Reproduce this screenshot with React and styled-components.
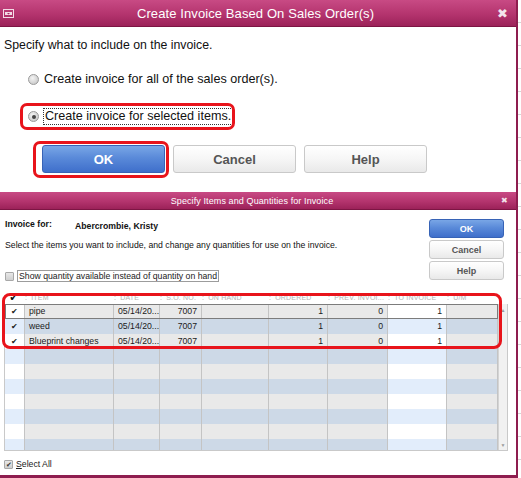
import styled, { createGlobalStyle } from "styled-components";

const GlobalStyle = createGlobalStyle`
    html, body {
        margin: 0;
        padding: 0;
    }
    body {
        width: 521px;
        height: 478px;
        overflow: hidden;
        font-family: "Liberation Sans", Arial, sans-serif;
        background-color: #fff;
        background-image: repeating-linear-gradient(
            to bottom,
            transparent 0px,
            transparent 22px,
            #d6d6d6 22px,
            #d6d6d6 23px
        );
    }
`;

const Page = styled.div`
    display: flex;
    flex-direction: column;
    width: 518px;
`;

const Dialog = styled.div`
    position: relative;
    display: flex;
    flex-direction: column;
    background: #fff;
    height: ${(p) => p.$height}px;
    border-right: 2px solid #8e1d4f;
    border-bottom: ${(p) => (p.$bottom ? "3px solid #8e1d4f" : "none")};
    box-sizing: border-box;
`;

const TitleBar = styled.div`
    display: flex;
    align-items: center;
    height: ${(p) => p.$h}px;
    padding: 0 ${(p) => p.$pad}px 0 3px;
    background: linear-gradient(to bottom, #c84a84 0%, #b4346e 55%, #9c2259 100%);
    border-bottom: 1px solid #7d1544;
    color: #fff;
    flex-shrink: 0;
`;

const TitleText = styled.div`
    flex: 1;
    text-align: center;
    font-size: ${(p) => p.$size}px;
    letter-spacing: 0.1px;
`;

const CloseX = styled.span`
    font-size: ${(p) => p.$size}px;
    color: #f3e4ec;
    line-height: 1;
`;

const Body1 = styled.div`
    display: flex;
    flex-direction: column;
    padding: 0 4px;
`;

const Lead = styled.div`
    font-size: 12.3px;
    color: #111;
    margin-top: 11px;
    line-height: 15px;
`;

const RadioRow = styled.label`
    display: flex;
    align-items: center;
    gap: 5px;
    font-size: 12.6px;
    color: #111;
    line-height: 15px;
`;

const RadioDot = styled.span`
    width: 11px;
    height: 11px;
    border-radius: 50%;
    box-sizing: border-box;
    border: 1px solid #9a9a9a;
    background: radial-gradient(circle at 40% 35%, #f4f4f4 0%, #cfcfcf 70%, #bdbdbd 100%);
    display: flex;
    align-items: center;
    justify-content: center;

    &::after {
        content: "";
        width: 4px;
        height: 4px;
        border-radius: 50%;
        background: ${(p) => (p.$on ? "#444" : "transparent")};
    }
`;

const FocusText = styled.span`
    outline: 1px dotted #333;
    outline-offset: 0;
    padding: 0 1px;
`;

const Ring = styled.span`
    position: relative;
    display: inline-flex;
    align-self: flex-start;

    &::after {
        content: "";
        position: absolute;
        top: ${(p) => p.$t}px;
        right: ${(p) => p.$r}px;
        bottom: ${(p) => p.$b}px;
        left: ${(p) => p.$l}px;
        border: 3px solid #e8141b;
        border-radius: 7px;
        pointer-events: none;
    }
`;

const ButtonRow = styled.div`
    display: flex;
    gap: 8px;
    margin-left: 38px;
    margin-top: 21px;
`;

const Button = styled.button`
    width: ${(p) => p.$w}px;
    height: ${(p) => p.$h}px;
    box-sizing: border-box;
    border-radius: 3px;
    font-family: "Liberation Sans", Arial, sans-serif;
    font-weight: bold;
    font-size: ${(p) => p.$size}px;
    padding: 0;
    cursor: default;
    color: ${(p) => (p.$primary ? "#fff" : "#555")};
    border: 1px solid ${(p) => (p.$primary ? "#3763b6" : "#c9c9c9")};
    background: ${(p) =>
        p.$primary
            ? "linear-gradient(to bottom, #79a6e6 0%, #5a8ad9 45%, #3f6fcb 100%)"
            : "linear-gradient(to bottom, #ffffff 0%, #f6f6f6 50%, #e9e9e9 100%)"};
`;

/* second dialog */

const Body2 = styled.div`
    display: flex;
    flex-direction: column;
    padding: 0 0 0 4px;
    flex: 1;
`;

const TopSection = styled.div`
    display: flex;
    justify-content: space-between;
    height: 81px;
`;

const InfoCol = styled.div`
    display: flex;
    flex-direction: column;
    padding-left: 1px;
    font-size: 8.7px;
    color: #111;
`;

const InfoRow = styled.div`
    display: flex;
    align-items: flex-end;
    margin-top: 9px;
    height: 12px;
    font-weight: bold;
`;

const InfoLabel = styled.span`
    width: 70px;
    position: relative;
    top: -2px;
`;

const InfoLine = styled.div`
    margin-top: 9px;
    line-height: 11px;
`;

const CheckRow = styled.div`
    display: flex;
    align-items: center;
    gap: 3px;
    margin-top: ${(p) => p.$mt}px;
    font-size: 8.7px;
    color: #222;
`;

const CheckBox = styled.span`
    width: 9px;
    height: 9px;
    box-sizing: border-box;
    border: 1px solid #a8a8a8;
    border-radius: 1px;
    background: linear-gradient(to bottom, #e8e8e8, #cfcfcf);
    display: flex;
    align-items: center;
    justify-content: center;
    font-size: 7px;
    color: #333;
    line-height: 1;
`;

const BoxedLabel = styled.span`
    border: 1px solid #9c9c9c;
    padding: 0 1px;
    line-height: 10px;
`;

const Under = styled.span`
    text-decoration: underline;
`;

const SideButtons = styled.div`
    display: flex;
    flex-direction: column;
    gap: 2px;
    margin-top: 9px;
    margin-right: 12px;
`;

const TableWrap = styled.div`
    position: relative;
    display: flex;
    flex-direction: column;
    width: 504px;
`;

const HeaderRow = styled.div`
    display: flex;
    height: 13px;
    align-items: center;
`;

const HeadCell = styled.div`
    width: ${(p) => p.$w}px;
    flex-shrink: 0;
    font-size: 7px;
    color: #b4b4b4;
    white-space: nowrap;
    overflow: hidden;
    letter-spacing: 0.2px;
    padding-left: 1px;
    box-sizing: border-box;
`;

const HeadCheck = styled.div`
    width: ${(p) => p.$w}px;
    flex-shrink: 0;
    text-align: center;
    font-size: 12px;
    font-weight: bold;
    color: #111;
    line-height: 13px;
`;

const Sep = styled.span`
    color: #a0a0a0;
    margin-right: 4px;
`;

const GridArea = styled.div`
    display: flex;
    height: 147px;
    border: 1px solid #c9c9c9;
    border-top: none;
    box-sizing: border-box;
    overflow: hidden;
    width: 504px;
`;

const Rows = styled.div`
    display: flex;
    flex-direction: column;
    width: 493px;
    flex-shrink: 0;
`;

const Row = styled.div`
    display: flex;
    height: 15px;
    flex-shrink: 0;
    box-sizing: border-box;
    background: ${(p) => (p.$alt ? "#cdd9e7" : "#e9e9e9")};
    outline: ${(p) => (p.$focus ? "1px solid #7c7c7c" : "none")};
    outline-offset: -1px;
    position: relative;
`;

const Cell = styled.div`
    width: ${(p) => p.$w}px;
    flex-shrink: 0;
    box-sizing: border-box;
    border-right: 1px solid #c4c4c4;
    font-size: 8.7px;
    color: #1a1a1a;
    line-height: 15px;
    padding: 0 4px;
    white-space: nowrap;
    overflow: hidden;
    text-align: ${(p) => (p.$right ? "right" : "left")};
    background: ${(p) => (p.$light ? (p.$alt ? "#e2edfb" : "#ffffff") : "transparent")};
`;

const CheckCell = styled(Cell)`
    text-align: center;
    padding: 0;
    font-size: 8px;
    border-right: 1px solid #c4c4c4;
`;

const ScrollBar = styled.div`
    flex: 1;
    display: flex;
    flex-direction: column;
    justify-content: space-between;
    align-items: center;
    background: #f1f1f1;
    border-left: 1px solid #d4d4d4;
    font-size: 5px;
    color: #9a9a9a;
    padding: 3px 0 2px;
`;

const Annotation = styled.div`
    position: absolute;
    top: 2px;
    left: -2px;
    width: 500px;
    height: 56px;
    box-sizing: border-box;
    border: 3px solid #e8141b;
    border-radius: 8px;
    pointer-events: none;
`;

const MenuIcon = () => (
    <svg width="11" height="9" viewBox="0 0 11 9">
        <rect x="0.5" y="0.5" width="10" height="8" fill="none" stroke="#f3dbe6" strokeWidth="1" />
        <rect x="2" y="3" width="7" height="3" fill="#f3dbe6" />
        <path d="M4 4 L7 4 L5.5 5.5 Z" fill="#a52a62" />
    </svg>
);

const COLS = [20, 89, 46, 42, 67, 59, 60, 59, 51];
const HEADS = ["ITEM", "DATE", "S.O. NO.", "ON HAND", "ORDERED", "PREV. INVOI...", "TO INVOICE", "U/M"];

const items = [
    { name: "pipe", date: "05/14/20...", so: "7007", ordered: 1, prev: 0, inv: 1 },
    { name: "weed", date: "05/14/20...", so: "7007", ordered: 1, prev: 0, inv: 1 },
    { name: "Blueprint changes", date: "05/14/20...", so: "7007", ordered: 1, prev: 0, inv: 1 },
];

export default function App() {
    const rows = [];
    for (let i = 0; i < 10; i++) {
        rows.push(items[i] || null);
    }

    return (
        <>
            <GlobalStyle />
            <Page>
                <Dialog $height={192}>
                    <TitleBar $h={26} $pad={8}>
                        <MenuIcon />
                        <TitleText $size={13}>Create Invoice Based On Sales Order(s)</TitleText>
                        <CloseX $size={13}>✖</CloseX>
                    </TitleBar>
                    <Body1>
                        <Lead>Specify what to include on the invoice.</Lead>
                        <RadioRow style={{ marginLeft: 24, marginTop: 19 }}>
                            <RadioDot />
                            Create invoice for all of the sales order(s).
                        </RadioRow>
                        <Ring $t={-6} $r={-3} $b={-6} $l={-8} style={{ marginLeft: 24, marginTop: 22 }}>
                            <RadioRow>
                                <RadioDot $on />
                                <FocusText>Create invoice for selected items.</FocusText>
                            </RadioRow>
                        </Ring>
                        <ButtonRow>
                            <Ring $t={-4} $r={-4} $b={-5} $l={-9}>
                                <Button $primary $w={123} $h={28} $size={13}>OK</Button>
                            </Ring>
                            <Button $w={123} $h={28} $size={13}>Cancel</Button>
                            <Button $w={123} $h={28} $size={13}>Help</Button>
                        </ButtonRow>
                    </Body1>
                </Dialog>

                <Dialog $height={286} $bottom>
                    <TitleBar $h={17} $pad={8}>
                        <TitleText $size={9}>Specify Items and Quantities for Invoice</TitleText>
                        <CloseX $size={8}>✖</CloseX>
                    </TitleBar>
                    <Body2>
                        <TopSection>
                            <InfoCol>
                                <InfoRow>
                                    <InfoLabel>Invoice for:</InfoLabel>
                                    <span>Abercrombie, Kristy</span>
                                </InfoRow>
                                <InfoLine>
                                    Select the items you want to include, and change any quantities for use on the invoice.
                                </InfoLine>
                                <CheckRow $mt={19}>
                                    <CheckBox />
                                    <BoxedLabel>Show quantity available instead of quantity on hand</BoxedLabel>
                                </CheckRow>
                            </InfoCol>
                            <SideButtons>
                                <Button $primary $w={75} $h={19} $size={9}>OK</Button>
                                <Button $w={75} $h={19} $size={9}>Cancel</Button>
                                <Button $w={75} $h={19} $size={9}>Help</Button>
                            </SideButtons>
                        </TopSection>

                        <TableWrap>
                            <HeaderRow>
                                <HeadCheck $w={COLS[0]}>✓</HeadCheck>
                                {HEADS.map((h, i) => (
                                    <HeadCell key={h} $w={COLS[i + 1]}>
                                        <Sep>:</Sep>
                                        {h}
                                    </HeadCell>
                                ))}
                            </HeaderRow>
                            <GridArea>
                                <Rows>
                                    {rows.map((r, i) => {
                                        const alt = i % 2 === 1;
                                        return (
                                            <Row key={i} $alt={alt} $focus={i === 0}>
                                                <CheckCell $w={COLS[0]} $light $alt={alt}>{r ? "✔" : ""}</CheckCell>
                                                <Cell $w={COLS[1]}>{r ? r.name : ""}</Cell>
                                                <Cell $w={COLS[2]}>{r ? r.date : ""}</Cell>
                                                <Cell $w={COLS[3]} $right>{r ? r.so : ""}</Cell>
                                                <Cell $w={COLS[4]} $right></Cell>
                                                <Cell $w={COLS[5]} $right>{r ? r.ordered : ""}</Cell>
                                                <Cell $w={COLS[6]} $right>{r ? r.prev : ""}</Cell>
                                                <Cell $w={COLS[7]} $right $light $alt={alt}>{r ? r.inv : ""}</Cell>
                                                <Cell $w={COLS[8]}></Cell>
                                            </Row>
                                        );
                                    })}
                                </Rows>
                                <ScrollBar>
                                    <span>▲</span>
                                    <span>▼</span>
                                </ScrollBar>
                            </GridArea>
                            <Annotation />
                        </TableWrap>

                        <CheckRow $mt={8}>
                            <CheckBox>✔</CheckBox>
                            <span>
                                <Under>S</Under>elect All
                            </span>
                        </CheckRow>
                    </Body2>
                </Dialog>
            </Page>
        </>
    );
}
